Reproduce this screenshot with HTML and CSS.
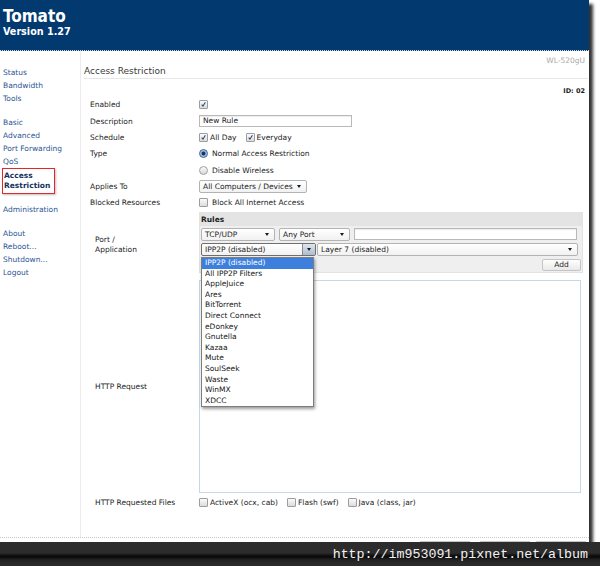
FILE: index.html
```html
<!DOCTYPE html>
<html>
<head>
<meta charset="utf-8">
<title>Tomato - Access Restriction</title>
<link rel="stylesheet" href="styles.css">
</head>
<body>
<div class="window">
  <header class="top">
    <div class="title">Tomato</div>
    <div class="version">Version 1.27</div>
  </header>
  <div class="main">
    <nav class="side">
      <div class="grp">
        <a>Status</a><a>Bandwidth</a><a>Tools</a>
      </div>
      <div class="grp">
        <a>Basic</a><a>Advanced</a><a>Port Forwarding</a><a>QoS</a>
        <a class="active">Access<br>Restriction</a>
      </div>
      <div class="grp g-admin"><a>Administration</a></div>
      <div class="grp">
        <a>About</a><a>Reboot...</a><a>Shutdown...</a><a>Logout</a>
      </div>
    </nav>
    <section class="content">
      <div class="model">WL-520gU</div>
      <h1 class="heading">Access Restriction</h1>
      <div class="rid">ID: 02</div>
      <div class="form">
        <div class="lbl">Enabled</div>
        <div class="fld"><span class="cb on"><svg viewBox="0 0 9 9"><path d="M2.2 4.6l1.6 2.1L6.9 1.6"/></svg></span></div>

        <div class="lbl">Description</div>
        <div class="fld"><div class="inp w-desc">New Rule</div></div>

        <div class="lbl">Schedule</div>
        <div class="fld">
          <span class="cb on"><svg viewBox="0 0 9 9"><path d="M2.2 4.6l1.6 2.1L6.9 1.6"/></svg></span><span class="opt">All Day</span>
          <span class="cb on"><svg viewBox="0 0 9 9"><path d="M2.2 4.6l1.6 2.1L6.9 1.6"/></svg></span><span class="opt">Everyday</span>
        </div>

        <div class="lbl">Type</div>
        <div class="fld"><span class="rd on"></span><span class="opt r">Normal Access Restriction</span></div>

        <div class="lbl"></div>
        <div class="fld"><span class="rd"></span><span class="opt r">Disable Wireless</span></div>

        <div class="lbl">Applies To</div>
        <div class="fld"><div class="sel w-apply"><span>All Computers / Devices</span><i class="arr"></i></div></div>

        <div class="lbl">Blocked Resources</div>
        <div class="fld"><span class="cb"></span><span class="opt r">Block All Internet Access</span></div>

        <div class="lbl sub pa">Port /<br>Application</div>
        <div class="fld rules-cell">
          <div class="rules">
            <div class="rules-h">Rules</div>
            <div class="rules-b">
              <div class="rrow">
                <div class="sel w-proto"><span>TCP/UDP</span><i class="arr"></i></div>
                <div class="sel w-port"><span>Any Port</span><i class="arr"></i></div>
                <div class="inp w-ports"></div>
              </div>
              <div class="rrow">
                <div class="sel open w-ipp"><span>IPP2P (disabled)</span><b class="abtn"><i class="arr"></i></b></div>
                <div class="sel w-l7"><span>Layer 7 (disabled)</span><i class="arr"></i></div>
              </div>
              <div class="rrow end"><div class="btn add">Add</div></div>
            </div>
            <ul class="dd">
              <li class="hl">IPP2P (disabled)</li>
              <li>All IPP2P Filters</li>
              <li>AppleJuice</li>
              <li>Ares</li>
              <li>BitTorrent</li>
              <li>Direct Connect</li>
              <li>eDonkey</li>
              <li>Gnutella</li>
              <li>Kazaa</li>
              <li>Mute</li>
              <li>SoulSeek</li>
              <li>Waste</li>
              <li>WinMX</li>
              <li>XDCC</li>
            </ul>
          </div>
        </div>

        <div class="lbl sub hr">HTTP Request</div>
        <div class="fld ta-cell"><div class="ta"></div></div>

        <div class="lbl sub">HTTP Requested Files</div>
        <div class="fld">
          <span class="cb"></span><span class="opt">ActiveX (ocx, cab)</span>
          <span class="cb"></span><span class="opt">Flash (swf)</span>
          <span class="cb"></span><span class="opt">Java (class, jar)</span>
        </div>
      </div>
    </section>
  </div>
  <div class="bottom">
    <div class="btn big">Delete</div>
    <div class="btn big">Save</div>
    <div class="btn big">Cancel</div>
  </div>
</div>
<div class="watermark">http://im953091.pixnet.net/album</div>
</body>
</html>
```
FILE: styles.css
```css
* { box-sizing: border-box; margin: 0; padding: 0; }
body {
  font-family: "DejaVu Sans", Verdana, sans-serif;
  font-size: 7.5px;
  color: #1c1c1c;
  background: #fff;
  width: 600px;
  height: 566px;
  overflow: hidden;
  position: relative;
}
.window {
  width: 589px;
  height: 553px;
  background: #fff;
  box-shadow: 4px 4px 3px rgba(0,0,0,0.8);
  display: flex;
  flex-direction: column;
}
.top {
  height: 51px;
  flex: none;
  background: #023a6f;
  border-bottom: 1px dotted #d5dee8;
  padding: 7px 0 0 3px;
  color: #fff;
  font-family: "DejaVu Sans Condensed", "DejaVu Sans", sans-serif;
  font-stretch: condensed;
  font-weight: bold;
}
.title { font-size: 17px; line-height: 18px; }
.version { font-size: 10.7px; line-height: 13px; }

.main { display: flex; height: 486px; flex: none; }
.side {
  width: 81px;
  flex: none;
  border-right: 1px solid #ececec;
  padding: 15px 0 0 3px;
  display: flex;
  flex-direction: column;
  gap: 11px;
}
.grp { display: flex; flex-direction: column; align-items: flex-start; }
.side a { color: #2a5694; line-height: 13px; }
.side a.active {
  color: #13305c;
  font-weight: bold;
  line-height: 10px;
  border: 1px solid #e2262a;
  padding: 2px 4px 2px 1px;
  margin: 0 0 0 -1px;
  box-shadow: 1px 1px 2px rgba(0,0,0,0.25);
}
.g-admin { margin-top: -2px; }

.content { flex: 1; padding: 5px 1px 0 3px; }
.model { line-height: 9px; text-align: right; color: #a8a8a8; padding-right: 3px; }
.heading {
  font-size: 9px;
  font-weight: normal;
  color: #3a3a3a;
  line-height: 12px;
  padding-bottom: 1px;
  border-bottom: 1px solid #e6e6e6;
}
.rid { margin-top: 8px; line-height: 9px; text-align: right; font-weight: bold; font-size: 6.5px; padding-right: 3px; }

.form {
  margin-left: 6px;
  display: grid;
  grid-template-columns: 109px 384px;
  grid-template-rows: 17px 16px 16px 17px 16px 16px 17px auto auto 19px;
}
.lbl { display: flex; align-items: center; }
.lbl.sub { padding-left: 5px; line-height: 10px; }
.lbl.pa { padding-top: 6px; }
.lbl.hr { padding-top: 8px; }
.fld { display: flex; align-items: center; }
.opt { margin-left: 2px; margin-right: 9px; }
.opt.r { margin-left: 4px; }

.cb {
  width: 9px; height: 9px; flex: none;
  border: 1px solid #9d9d9d;
  border-radius: 1px;
  background: linear-gradient(#fafafa, #dcdcdc);
  display: inline-flex;
}
.cb svg { width: 7px; height: 7px; }
.cb path { fill: none; stroke: #23406f; stroke-width: 1.3; }
.rd {
  width: 9px; height: 9px; flex: none;
  border-radius: 50%;
  border: 1px solid #a0a0a0;
  background: linear-gradient(#fafafa, #d8d8d8);
}
.rd.on {
  border-color: #3d5f8d;
  background: radial-gradient(circle, #1f3250 0 1.6px, #7ea4d6 2.2px, #c8dcf3 4px);
}
.inp {
  height: 12px;
  border: 1px solid #b9b9b9;
  box-shadow: inset 0 1px 1px rgba(0,0,0,0.08);
  background: #fff;
  padding: 0 3px;
  line-height: 10px;
}
.w-desc { width: 153px; }

.sel {
  height: 13px;
  border: 1px solid #b3b3b3;
  border-radius: 2px;
  background: linear-gradient(#fff, #f1f1f1);
  display: flex;
  align-items: center;
  justify-content: space-between;
  padding: 0 5px 0 3px;
  flex: none;
}
.arr {
  display: block;
  width: 0; height: 0;
  border-left: 2.5px solid transparent;
  border-right: 2.5px solid transparent;
  border-top: 3px solid #1a1a1a;
}
.w-apply { width: 108px; }

.rules-cell { align-items: flex-start; }
.rules {
  margin-top: 1px;
  width: 384px;
  height: 61px;
  border: 1px solid #e3e3e3;
  position: relative;
  background: #efefef;
}
.rules-h {
  height: 13px;
  background: #e4e4e4;
  font-weight: bold;
  line-height: 13px;
  padding-left: 1px;
}
.rules-b { padding: 2px 5px 0 1px; display: flex; flex-direction: column; gap: 2px; }
.rrow { display: flex; gap: 4px; }
.rrow.end { justify-content: flex-end; margin-top: 1px; margin-right: -4px; }
.w-proto { width: 74px; }
.w-port { width: 71px; }
.w-ports { width: 223px; height: 12px; }
.w-ipp { width: 115px; border-color: #6f6f6f; padding-right: 0; }
.abtn {
  width: 13px; height: 11px;
  border-left: 1px solid #8a8a8a;
  background: linear-gradient(#dfe6ef, #aebccf);
  display: flex; align-items: center; justify-content: center;
}
.w-l7 { width: 261px; margin-left: -3px; }

.btn {
  border: 1px solid #c4c4c4;
  border-radius: 2px;
  background: linear-gradient(#fff, #e9e9e9);
  text-align: center;
}
.add { width: 39px; height: 12px; line-height: 10px; }

.dd {
  list-style: none;
  position: absolute;
  left: 1px;
  top: 44px;
  width: 113px;
  background: #fff;
  border: 1px solid #7d7d7d;
  box-shadow: 1px 2px 3px rgba(0,0,0,0.4);
  z-index: 2;
}
.dd li { line-height: 10.6px; padding-left: 3px; color: #151515; }
.dd li.hl { background: #3d7fdc; color: #fff; }

.ta-cell { align-items: flex-start; }
.ta {
  margin-top: 7px;
  width: 382px;
  height: 213px;
  border: 1px solid #c6d8e8;
  background: #fff;
}

.bottom {
  border-top: 1px dotted #c9c9c9;
  padding: 3px 2px 0 0;
  display: flex;
  justify-content: flex-end;
  gap: 4px;
}
.btn.big { width: 52px; height: 16px; line-height: 11px; }
.bottom .btn.big:first-child { margin-right: 4px; }

.watermark {
  position: absolute;
  left: 0;
  top: 542px;
  width: 600px;
  height: 24px;
  background: linear-gradient(#2c2c2c 0, #2c2c2c 11px, #141414 13px, #080808 15px, #1e1e1e 17px, #2a2a2a 21px);
  color: #f2f2f2;
  font-family: "Liberation Mono", monospace;
  font-size: 13.3px;
  line-height: 24px;
  padding-top: 1px;
  text-align: right;
  padding-right: 12px;
  z-index: 5;
}
```
